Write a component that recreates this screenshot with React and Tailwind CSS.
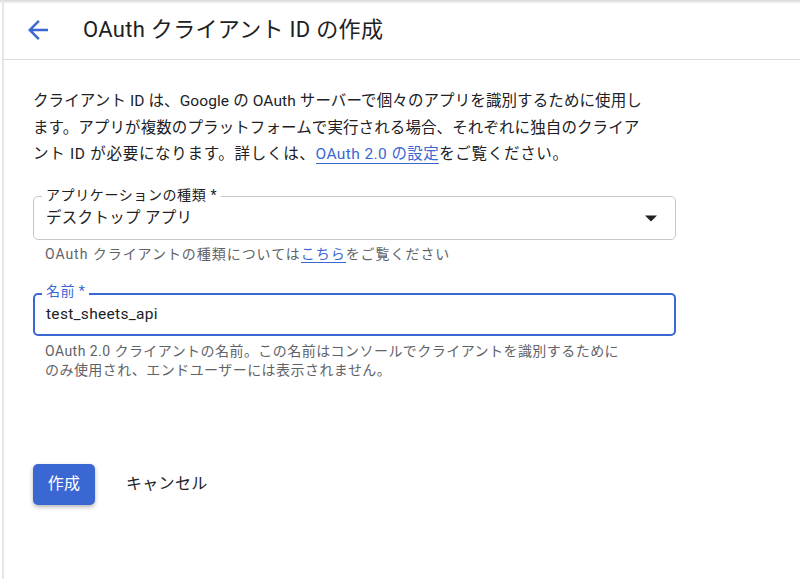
export default function App() {
  const font = { fontFamily: 'Roboto, "Noto Sans CJK JP", sans-serif' };
  return (
    <div className="w-[800px] h-[579px] bg-white relative overflow-hidden text-[#202124]" style={font}>
      <div className="absolute top-0 left-0 right-0 h-[4px] bg-gradient-to-b from-[#d8d8d8] to-white" />
      <div className="absolute top-0 bottom-0 left-[2px] w-[2px] bg-[#e6e6e6]" />
      <div className="ml-[4px] h-full flex flex-col">
        <div className="h-[60px] border-b border-[#dadce0] flex items-center pl-[19px]">
          <svg width="30" height="30" viewBox="0 0 24 24" className="text-[#3b67d3]">
            <path d="M20 11H7.83l5.59-5.59L12 4l-8 8 8 8 1.41-1.41L7.83 13H20v-2z" fill="currentColor" />
          </svg>
          <h1 className="ml-[30px] text-[22px] font-normal tracking-[0.3px]">OAuth クライアント ID の作成</h1>
        </div>
        <div className="pl-[29px] pr-[24px]">
          <p className="mt-[28px] text-[15.5px] leading-[26.5px] tracking-[0.1px] w-[660px]">
            <span className="block">クライアント ID は、Google の OAuth サーバーで個々のアプリを識別するために使用し</span>
            <span className="block">ます。アプリが複数のプラットフォームで実行される場合、それぞれに独自のクライア</span>
            <span className="block tracking-[0.7px]">ント ID が必要になります。詳しくは、<span className="text-[#3b67d3] border-b border-[#3b67d3] tracking-[0.4px]">OAuth 2.0 の設定</span>をご覧ください。</span>
          </p>
          <div className="mt-[28px] relative w-[643px] h-[44px] border border-[#c4c7c5] rounded-[5px] flex items-center pl-[12px] pr-[18px]">
            <span className="absolute -top-[12px] left-[8px] bg-white px-[4px] text-[14px] leading-[20px] tracking-[0.6px] text-[#202124]">アプリケーションの種類 *</span>
            <span className="flex-1 text-[15.5px] tracking-[0.3px] pt-[2px]">デスクトップ アプリ</span>
            <svg width="12" height="8" viewBox="0 0 12 8">
              <path d="M0 1.5h12L6 7.5z" fill="#202124" />
            </svg>
          </div>
          <div className="mt-[4px] pl-[12px] text-[14px] leading-[20px] tracking-[0.95px] text-[#5f6368]">
            OAuth クライアントの種類については<span className="text-[#3b67d3] border-b border-[#3b67d3]">こちら</span>をご覧ください
          </div>
          <div className="mt-[29px] relative w-[643px] h-[43px] border-2 border-[#3b67d3] rounded-[5px] flex items-center pl-[11px]">
            <span className="absolute -top-[14px] left-[7px] bg-white px-[4px] text-[14px] leading-[20px] tracking-[0.4px] text-[#3b67d3]">名前 *</span>
            <span className="text-[15.5px] tracking-[0.3px] pt-[2px]">test_sheets_api</span>
          </div>
          <div className="mt-[6px] pl-[12px] text-[14px] leading-[19.5px] tracking-[0.45px] text-[#5f6368] w-[660px]">
            OAuth 2.0 クライアントの名前。この名前はコンソールでクライアントを識別するために<br />のみ使用され、エンドユーザーには表示されません。
          </div>
          <div className="mt-[83px] flex items-center">
            <button className="w-[62px] h-[41px] rounded-[5px] bg-[#3b67d3] text-white text-[16px] tracking-[0.3px] shadow-[0_2px_4px_rgba(0,0,0,0.3)]">作成</button>
            <span className="ml-[31px] text-[16px] tracking-[0.3px]">キャンセル</span>
          </div>
        </div>
      </div>
    </div>
  );
}
